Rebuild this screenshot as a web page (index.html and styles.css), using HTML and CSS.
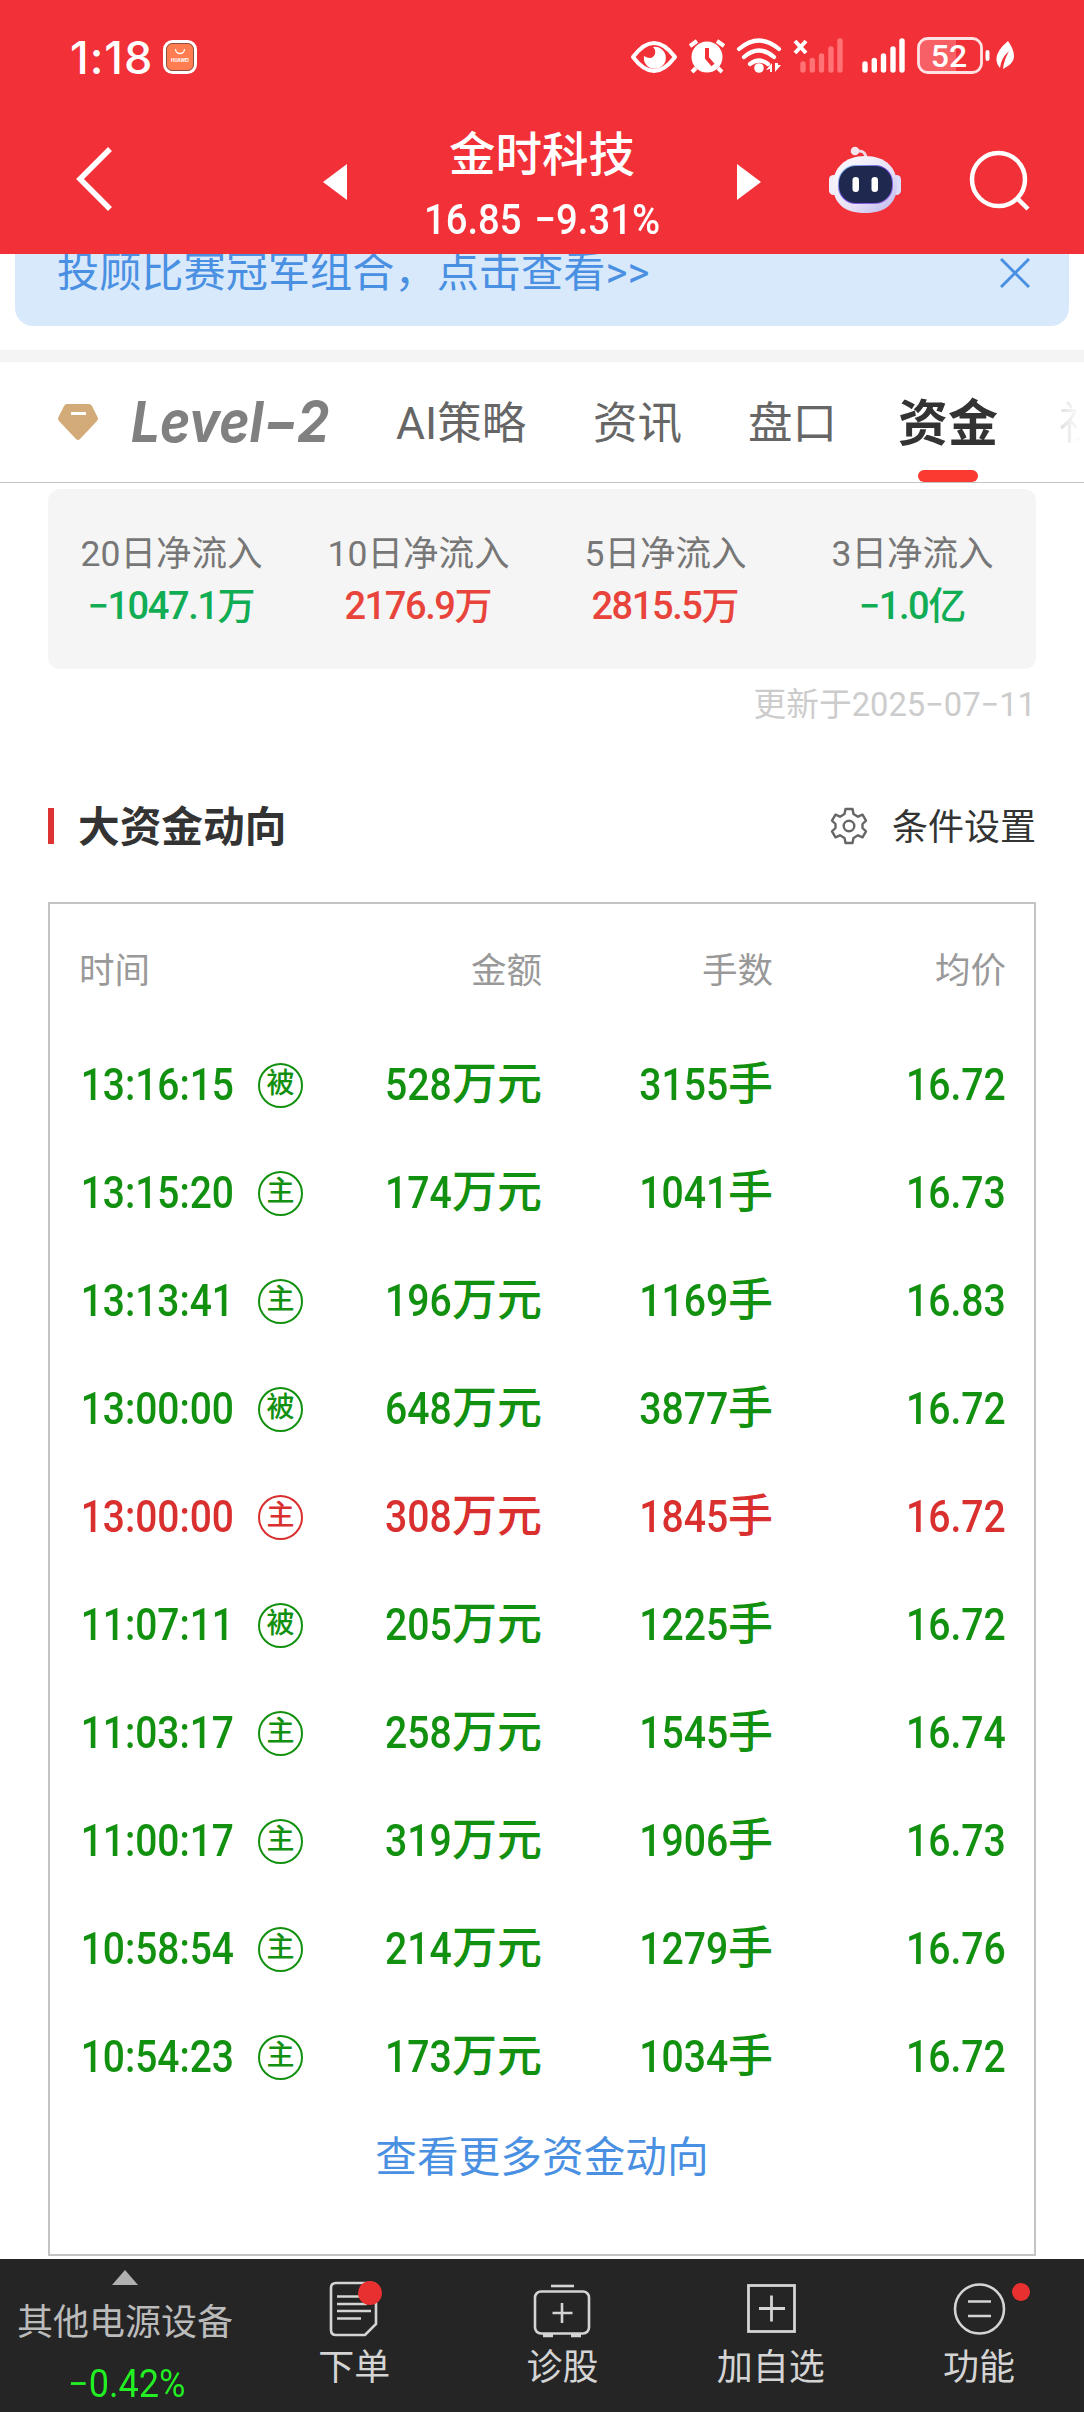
FILE: index.html
```html
<!DOCTYPE html>
<html lang="zh-CN">
<head>
<meta charset="utf-8">
<title>金时科技 资金</title>
<link rel="stylesheet" href="styles.css">
</head>
<body>
<header class="top">
  <div class="status">
    <span class="clock">1:18</span>
    <svg class="app-badge" width="34" height="34" viewBox="0 0 34 34"><rect x="1.5" y="1.5" width="31" height="31" rx="8" fill="#ff7d50" stroke="#fff" stroke-width="3"/><rect x="3.5" y="3.5" width="27" height="27" rx="6" fill="none" stroke="#8a5044" stroke-width="1"/><path d="M12.500 9a4.500 4.500 0 0 0 9 0" fill="none" stroke="#fff" stroke-width="1.300"/><text x="17" y="21.500" font-size="4.800" font-weight="700" fill="#fff" text-anchor="middle" font-family="Roboto, sans-serif">HUAWEI</text></svg>
    <svg class="status-icons" width="390" height="40" viewBox="628 36 390 40" fill="none" stroke="#fff">
      <path d="M633 57Q654 29 675 57Q654 85 633 57Z" stroke-width="4" stroke-linejoin="round"/>
      <path d="M653 47A11 11 0 1 1 644 56Q652 61 655 54Q656 50 653 47Z" fill="#fff" stroke="none"/>
      <circle cx="707" cy="57" r="15.500" fill="#fff" stroke="none"/>
      <path d="M690 46l7-5M717 41l7 5M696 68l-4 4M718 68l4 4" stroke-width="4"/>
      <path d="M707 48v10l6 7" stroke="#f13037" stroke-width="4"/>
      <path d="M739 49Q759 32 779 49M744 57Q759 44 774 57M750 64Q759 57 768 64" stroke-width="4.200" stroke-linecap="round"/>
      <circle cx="759" cy="68" r="4.800" fill="#fff" stroke="none"/>
      <path d="M766 70l6-7v9h-2v-3zM775 63v9l6-7h-3v-2z" fill="#fff" stroke="none"/>
      <path d="M795 41l11 12M806 41l-11 12" stroke-width="4"/>
      <path d="M803 64v6M812.300 60.500v9.500M821.500 56v14M831 49v21M840 41v29" stroke="#ff7376" stroke-width="5.400" stroke-linecap="round"/>
      <path d="M865 64v6M874.300 60.500v9.500M883.500 56v14M893 49v21M902 41v29" stroke-width="5.400" stroke-linecap="round"/>
      <path d="M927 39h29v33h-29a8 8 0 0 1-8-8V47a8 8 0 0 1 8-8z" fill="#f76166" stroke="none"/>
      <rect x="918.500" y="38.500" width="63" height="34" rx="9" stroke="#ffe3e4" stroke-width="2.800"/>
      <path d="M987.500 52v7" stroke-width="4" stroke-linecap="round"/>
      <text x="949" y="67" font-family="Roboto, sans-serif" font-size="32" font-weight="500" text-anchor="middle" fill="#fff" stroke="none">52</text>
      <path d="M1008 41Q1020 58 1008 66L1003 69Q1004 60 1009 51Q1001 58 1000 68Q990 56 1008 41Z" fill="#fff" stroke="none"/>
    </svg>
  </div>
  <div class="nav">
    <svg class="back" width="40" height="70" viewBox="0 0 40 70"><path d="M35 5L5 35L35 65" fill="none" stroke="#fff" stroke-width="5.500"/></svg>
    <svg class="prev" width="24" height="36" viewBox="0 0 24 36"><path d="M24 0v36L0 18z" fill="#fff"/></svg>
    <div class="stock"><h1>金时科技</h1><p>16.85 −9.31%</p></div>
    <svg class="next" width="24" height="36" viewBox="0 0 24 36"><path d="M0 0v36l24-18z" fill="#fff"/></svg>
    <svg class="robot" width="74" height="70" viewBox="0 0 74 70">
      <defs><linearGradient id="shell" x1="0" y1="0" x2="1" y2="1"><stop offset="0" stop-color="#fff"/><stop offset=".6" stop-color="#e6dff5"/><stop offset="1" stop-color="#b9b6ee"/></linearGradient><linearGradient id="visor" x1="0" y1="0" x2="1" y2="1"><stop offset="0" stop-color="#8fd8f5"/><stop offset=".5" stop-color="#6a44d8"/><stop offset="1" stop-color="#a679ef"/></linearGradient></defs>
      <path d="M29 6q9-1 9 8" fill="none" stroke="#f0d8e8" stroke-width="3"/><circle cx="27" cy="6" r="4.300" fill="#f6e4ee"/>
      <rect x="1" y="30" width="9" height="20" rx="4.500" fill="#f1eefc"/><rect x="64" y="30" width="9" height="20" rx="4.500" fill="#dcdcfa"/>
      <path d="M37 11C58 11 69 23 69 40C69 58 58 68 37 68S5 58 5 40C5 23 17 11 37 11Z" fill="url(#shell)"/>
      <rect x="10" y="20" width="55" height="39" rx="18" fill="url(#visor)"/><rect x="11" y="21" width="53" height="37" rx="17" fill="#1f284f"/>
      <rect x="24.500" y="32" width="6.500" height="15" rx="3.200" fill="#fff"/><rect x="43.500" y="32" width="6.500" height="15" rx="3.200" fill="#fff"/>
    </svg>
    <svg class="search" width="62" height="62" viewBox="0 0 62 62" fill="none" stroke="#fff" stroke-width="4.500"><circle cx="29.500" cy="30.500" r="26.500"/><path d="M48 49l11 11"/></svg>
  </div>
</header>
<main>
  <div class="banner-clip"><div class="banner"><span>投顾比赛冠军组合，点击查看&gt;&gt;</span><svg width="30" height="30" viewBox="0 0 30 30"><path d="M1 1l28 28M29 1L1 29" stroke="#4a90e2" stroke-width="3"/></svg></div></div>
  <nav class="tabs">
    <svg class="gem" width="40" height="36" viewBox="0 0 40 36"><path d="M9 0h22q2 0 3 2l6 12q0 2-1 3L22 35q-2 2-4 0L1 17q-1-1-1-3L6 2q1-2 3-2z" fill="#d2ab78"/><path d="M13 9.500h15" stroke="#fff" stroke-width="3"/></svg>
    <span class="level">Level−2</span>
    <span class="tab t1">AI策略</span><span class="tab t2">资讯</span><span class="tab t3">盘口</span>
    <span class="tab active">资金</span><span class="tab faded">社区</span>
  </nav>
  <section class="flows">
    <div class="flow down"><span>20日净流入</span><b><i>−1047.1</i>万</b></div>
    <div class="flow up"><span>10日净流入</span><b><i>2176.9</i>万</b></div>
    <div class="flow up"><span>5日净流入</span><b><i>2815.5</i>万</b></div>
    <div class="flow down"><span>3日净流入</span><b><i>−1.0</i>亿</b></div>
  </section>
  <p class="updated">更新于<i>2025−07−11</i></p>
  <div class="section-head">
    <h2>大资金动向</h2>
    <svg width="38" height="38" viewBox="0 0 38 38" fill="none" stroke="#666" stroke-width="2.400" stroke-linejoin="round"><path d="M15.500 2h7l1 5 4.500 2.700 4.500-2 3.500 6-3.500 3.300v4l3.500 3.300-3.500 6-4.500-2L23.500 31l-1 5h-7l-1-5L10 28.300l-4.500 2-3.500-6L5.500 21v-4L2 13.700l3.500-6 4.500 2L14.500 7z"/><circle cx="19" cy="19" r="5.300"/></svg>
    <span>条件设置</span>
  </div>
  <section class="deals">
    <div class="row head"><span class="wide">时间</span><span>金额</span><span>手数</span><span>均价</span></div>
    <div class="row"><time>13:16:15</time><em>被</em><span><i>528</i>万元</span><span><i>3155</i>手</span><span><i>16.72</i></span></div>
    <div class="row"><time>13:15:20</time><em>主</em><span><i>174</i>万元</span><span><i>1041</i>手</span><span><i>16.73</i></span></div>
    <div class="row"><time>13:13:41</time><em>主</em><span><i>196</i>万元</span><span><i>1169</i>手</span><span><i>16.83</i></span></div>
    <div class="row"><time>13:00:00</time><em>被</em><span><i>648</i>万元</span><span><i>3877</i>手</span><span><i>16.72</i></span></div>
    <div class="row buy"><time>13:00:00</time><em>主</em><span><i>308</i>万元</span><span><i>1845</i>手</span><span><i>16.72</i></span></div>
    <div class="row"><time>11:07:11</time><em>被</em><span><i>205</i>万元</span><span><i>1225</i>手</span><span><i>16.72</i></span></div>
    <div class="row"><time>11:03:17</time><em>主</em><span><i>258</i>万元</span><span><i>1545</i>手</span><span><i>16.74</i></span></div>
    <div class="row"><time>11:00:17</time><em>主</em><span><i>319</i>万元</span><span><i>1906</i>手</span><span><i>16.73</i></span></div>
    <div class="row"><time>10:58:54</time><em>主</em><span><i>214</i>万元</span><span><i>1279</i>手</span><span><i>16.76</i></span></div>
    <div class="row"><time>10:54:23</time><em>主</em><span><i>173</i>万元</span><span><i>1034</i>手</span><span><i>16.72</i></span></div>
    <a class="more">查看更多资金动向</a>
  </section>
</main>
<footer class="bottom">
  <div class="sector"><svg width="26" height="15" viewBox="0 0 26 15"><path d="M13 0l13 15H0z" fill="#b0b0b0"/></svg><span>其他电源设备</span><b>−0.42%</b></div>
  <div class="action"><svg width="60" height="60" viewBox="0 0 60 60" fill="none" stroke="#d4d4d4" stroke-width="2.600"><path d="M12 5h36q4 0 4 4v37L41 57H12q-5 0-5-5V10q0-5 5-5z"/><path d="M13 18.500h30M13 26h30M13 33h34M13 40.500h24"/><circle cx="46" cy="15" r="12" fill="#e93030" stroke="none"/></svg><span>下单</span></div>
  <div class="action"><svg width="60" height="60" viewBox="0 0 60 60" fill="none" stroke="#d4d4d4" stroke-width="2.600"><path d="M19 8h23"/><rect x="3" y="13.500" width="54" height="42" rx="6"/><path d="M30 25v20M20.500 35h20"/><path d="M11 57.500h10M39 57.500h10" stroke-width="3.500"/></svg><span>诊股</span></div>
  <div class="action"><svg width="60" height="60" viewBox="0 0 60 60" fill="none" stroke="#d4d4d4" stroke-width="2.800"><rect x="7.500" y="7.500" width="46" height="46"/><path d="M30.500 17.500v26M18 30.500h26"/></svg><span>加自选</span></div>
  <div class="action"><svg width="60" height="60" viewBox="0 0 60 60" fill="none" stroke="#d4d4d4" stroke-width="2.600"><circle cx="30.500" cy="31" r="24.500"/><path d="M19 23.500h23M19 38h23"/></svg><span>功能</span><u></u></div>
</footer>
</body>
</html>
```
FILE: styles.css
```css
* { box-sizing: border-box; margin: 0; padding: 0; }
body { width: 1084px; height: 2412px; overflow: hidden; background: #fff; font-family: Roboto, "Noto Sans CJK SC", sans-serif; color: #333; }
i, em { font-style: normal; }
svg { display: block; flex: none; }
u { text-decoration: none; }

.top { height: 254px; background: #f13037; color: #fff; }
.status { height: 112px; padding: 36px 66px 0 70px; display: flex; align-items: flex-start; }
.clock { width: 93px; font-family: Inter, Roboto, sans-serif; font-size: 45px; line-height: 43px; font-weight: 500; letter-spacing: 1px; white-space: nowrap; }
.app-badge { margin-top: 4px; }
.status-icons { margin-left: auto; }
.nav { height: 142px; padding-left: 75px; display: flex; }
.back { margin-top: 32px; }
.prev { margin: 52px 0 0 208px; }
.stock { width: 390px; padding-top: 12px; text-align: center; }
.stock h1 { font-size: 46.5px; line-height: 62px; font-weight: 500; }
.stock p { font-size: 42px; line-height: 50px; font-weight: 500; margin-top: 9px; transform: scaleX(.91); word-spacing: 4px; white-space: nowrap; }
.next { margin-top: 52px; }
.robot { margin: 33px 0 0 67px; }
.search { margin: 37px 0 0 67px; }

.banner-clip { height: 108px; border-bottom: 12px solid #f4f4f4; overflow: hidden; }
.banner { height: 72px; margin: 0 15px; padding: 0 39px 34px 42px; display: flex; align-items: center; justify-content: space-between; border-radius: 0 0 18px 18px; background: #d9e9fc; color: #4a90e2; font-size: 42.2px; line-height: 42px; }
.banner span { white-space: nowrap; }

.tabs { height: 121px; border-bottom: 1px solid #c4c4c4; display: flex; align-items: center; padding-left: 58px; overflow: hidden; white-space: nowrap; }
.tabs > * { flex: none; }
.level { width: 196px; margin-left: 33px; font-family: Inter, Roboto, sans-serif; font-size: 57px; line-height: 60px; font-weight: 700; font-style: italic; color: #808080; transform: scaleX(.9); transform-origin: left; }
.tab { margin-top: 4px; font-size: 44.5px; line-height: 60px; color: #666; }
.t1 { width: 131px; margin-left: 69px; }
.t2 { width: 88px; margin-left: 66px; }
.t3 { width: 88px; margin-left: 67px; }
.active { position: relative; width: 100px; margin-left: 62px; font-size: 50px; font-weight: 700; color: #333; }
.active::after { content: ""; position: absolute; left: 20px; top: 76px; width: 60px; height: 12px; border-radius: 6px; background: #fb3a32; }
.faded { margin-left: 61px; color: transparent; background: linear-gradient(90deg, #ddd, #fff 22px); -webkit-background-clip: text; background-clip: text; }

.flows { margin: 6px 48px 0; height: 180px; padding-top: 40px; display: grid; grid-template-columns: repeat(4, 1fr); border-radius: 12px; background: #f5f5f5; text-align: center; }
.flow { display: flex; flex-direction: column; align-items: center; }
.flow span { font-size: 35.5px; line-height: 50px; color: #777; }
.flow b { display: flex; align-items: baseline; font-size: 38px; line-height: 54px; font-weight: 500; }
.flow i { letter-spacing: -1.4px; }
.down b { color: #10ad54; }
.up b { color: #e8443b; }
.updated { margin: 9px 48px 0; padding-top: 2px; font-size: 32.7px; line-height: 50px; text-align: right; color: #ccc; }

.section-head { height: 50px; margin: 71px 48px 0; display: flex; align-items: center; font-size: 36px; line-height: 50px; color: #333; }
.section-head span { padding-top: 3px; }
.section-head h2 { height: 36px; margin-right: auto; padding-left: 24px; border-left: 6px solid #dd3333; font-size: 41.7px; line-height: 40px; font-weight: 700; }
.section-head svg { margin-right: 24px; }

.deals { height: 1354px; margin: 51px 48px 0; border: 2px solid #c4c4c4; padding-left: 29px; }
.row { height: 108px; display: grid; grid-template-columns: 179px 45px 239px 231px 233px; align-items: center; font-size: 45px; line-height: 60px; font-weight: 500; color: #12900f; }
.row > span { padding-bottom: 3px; text-align: right; white-space: nowrap; }
.row i { display: inline-block; transform: scaleX(.87); transform-origin: right; }
.row time { padding: 0 0 3px 2px; transform: scaleX(.865); transform-origin: left; }
.row em { width: 45px; height: 45px; margin-bottom: 1px; border: 2.5px solid; border-radius: 50%; font-size: 28px; line-height: 37px; font-weight: 500; text-align: center; }
.buy { color: #d92f2f; }
.head { height: 128px; font-size: 35.5px; font-weight: 400; color: #999; }
.row.head > span { padding: 5px 0 0; }
.head .wide { grid-column: span 2; }
.row.head > .wide { text-align: left; }
.more { display: block; margin-left: -29px; padding-top: 16px; font-size: 41.7px; line-height: 60px; text-align: center; color: #4a90e2; }

.bottom { height: 153px; margin-top: 3px; display: grid; grid-template-columns: 250px repeat(4, 208.3px); background: #252525; }
.sector { display: flex; flex-direction: column; align-items: center; padding-top: 11px; color: #bbb; font-size: 36px; }
.sector span { line-height: 50px; margin-top: 13px; }
.sector b { padding-left: 3px; font-weight: 400; font-size: 38px; line-height: 50px; margin-top: 11px; color: #22f022; transform: scaleX(.95); }
.action { position: relative; display: flex; flex-direction: column; align-items: center; padding-top: 19px; font-size: 36px; line-height: 50px; color: #d4d4d4; }
.action span { margin-top: 5px; }
.action u { position: absolute; left: 137px; top: 24px; width: 18px; height: 18px; border-radius: 50%; background: #e93030; }
```
